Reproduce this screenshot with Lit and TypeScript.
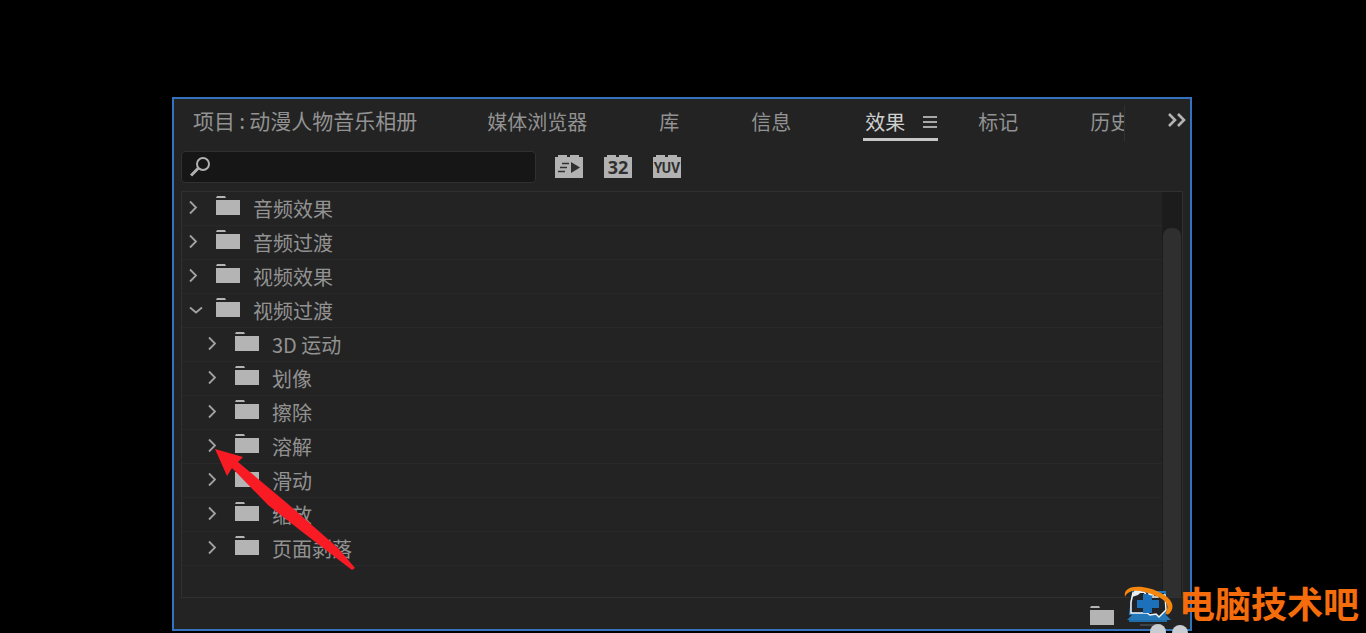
import { LitElement, html, svg, css } from "lit";
import { customElement, state } from "lit/decorators.js";
import { classMap } from "lit/directives/class-map.js";

interface Bin {
  name: string;
  level: number;
  open?: boolean;
}

const TABS = ["项目\u2009:\u2009动漫人物音乐相册", "媒体浏览器", "库", "信息", "效果", "标记", "历史"];

const BINS: Bin[] = [
  { name: "音频效果", level: 0 },
  { name: "音频过渡", level: 0 },
  { name: "视频效果", level: 0 },
  { name: "视频过渡", level: 0, open: true },
  { name: "3D 运动", level: 1 },
  { name: "划像", level: 1 },
  { name: "擦除", level: 1 },
  { name: "溶解", level: 1 },
  { name: "滑动", level: 1 },
  { name: "缩放", level: 1 },
  { name: "页面剥落", level: 1 },
];

const folder = html`<svg class="folder" viewBox="0 0 24 20" width="24" height="20" aria-hidden="true">
  <path fill="#b4b4b4" d="M1 0h8l1 2H0z M0 4h24v15H0z" />
</svg>`;

const chevron = (open?: boolean) => html`<svg class="chevron" viewBox="0 0 16 16" width="16" height="16" aria-hidden="true">
  <path fill="none" stroke="#a2a2a2" stroke-width="1.800" d=${open ? "M2 5.500l6 5 6-5" : "M2 1.500l6 6-6 6"} />
</svg>`;

const brick = (mark: unknown) => html`<svg viewBox="0 0 28 24" width="28" height="24" aria-hidden="true">
  <path fill="#b2b2b2" d="M0 3h3V1h9v2h3V1h9v2h4v21H0z" />
  ${mark}
</svg>`;

const FILTERS = [
  {
    label: "加速效果",
    mark: svg`<path fill="#303030" d="M16 8l9 5.500-9 5.500z"/><path stroke="#303030" stroke-width="1.600" d="M7 9.500h7M5 13.500h7M3 17.500h7"/>`,
  },
  { label: "32 位颜色", mark: svg`<text class="mark" x="14" y="20">32</text>` },
  { label: "YUV 效果", mark: svg`<text class="mark narrow" x="14" y="19">YUV</text>` },
];

@customElement("app-root")
export class AppRoot extends LitElement {
  @state() private active = 4;

  static styles = css`
    :host {
      box-sizing: border-box;
      position: relative;
      min-height: 100vh;
      padding: 97px 174px 2px 172px;
      overflow: hidden;
      background: #000;
      color: #929292;
      font: 400 20px/24px "Noto Sans CJK SC", sans-serif;
      display: flex;
      flex-direction: column;
    }
    * { box-sizing: border-box; }
    button {
      border: 0;
      padding: 0;
      margin: 0;
      background: none;
      color: inherit;
      font: inherit;
      text-align: left;
      white-space: nowrap;
    }
    svg { display: block; flex: none; }
    .panel {
      position: relative;
      flex: 1;
      display: flex;
      flex-direction: column;
      border: 2px solid #3373bd;
      background: #232323;
      padding: 0 7px;
    }
    .header {
      display: flex;
      height: 52px;
      padding: 6px 0 0 12px;
      margin-right: -3px;
    }
    .tabs {
      display: flex;
      flex: 1;
      min-width: 0;
      overflow: hidden;
      gap: 40px;
      height: 36px;
      border-right: 1px solid #303030;
    }
    .tab {
      flex: none;
      display: flex;
      align-items: flex-start;
      padding: 5px 32px 0 0;
    }
    .tab:first-child {
      padding: 3px 30px 0 0;
      font-size: 21px;
    }
    .tab.active {
      gap: 17px;
      padding: 5px 0 0 2px;
      color: #cfcfcf;
      border-bottom: 3px solid #c6c6c6;
    }
    .menu { margin-top: 5px; }
    .more {
      width: 61px;
      height: 30px;
      display: flex;
      justify-content: flex-end;
      align-items: center;
    }
    .tools {
      display: flex;
      align-items: center;
      gap: 19px;
      height: 32px;
    }
    .search {
      display: flex;
      align-items: center;
      width: 355px;
      height: 32px;
      padding: 0 8px;
      border: 1px solid #303030;
      border-radius: 4px;
      background: #161616;
    }
    .search input {
      flex: 1;
      min-width: 0;
      border: 0;
      outline: 0;
      background: none;
      color: inherit;
      font: inherit;
      height: 24px;
    }
    .filters {
      display: flex;
      gap: 21px;
      padding-bottom: 2px;
    }
    .mark {
      fill: #303030;
      text-anchor: middle;
      font-family: "Open Sans", sans-serif;
      font-weight: 700;
      font-size: 18px;
    }
    .narrow {
      font-family: Roboto, sans-serif;
      font-size: 14px;
    }
    .list {
      flex: 1;
      display: flex;
      margin-top: 8px;
      border: 1px solid #303030;
    }
    .rows { flex: 1; min-width: 0; }
    .row {
      display: flex;
      align-items: flex-start;
      width: 100%;
      height: 34px;
      padding: 4px 0 0 6px;
      border-bottom: 1px solid #292929;
    }
    .nested { padding-left: 25px; }
    .chevron { margin: 4px 12px 0 0; }
    .row .name { margin: 1px 0 0 13px; }
    .scroll {
      width: 20px;
      padding: 36px 1px 0;
      background: #1c1c1c;
    }
    .thumb {
      height: 100%;
      border-radius: 8px 8px 0 0;
      background: #2f2f2f;
    }
    .footer {
      display: flex;
      justify-content: flex-end;
      height: 31px;
      padding: 4px 69px 0 0;
    }
    .pointer {
      position: absolute;
      left: 40px;
      top: 349px;
      pointer-events: none;
    }
    .brand {
      position: absolute;
      right: 7px;
      bottom: 0;
      display: flex;
      align-items: flex-start;
      height: 53px;
      color: #f46c0b;
      font-size: 36px;
      line-height: 44px;
      font-weight: 700;
      white-space: nowrap;
    }
    .brand svg { overflow: visible; }
  `;

  render() {
    return html`
      <section class="panel">
        <div class="header">
          <div class="tabs" role="tablist">
            ${TABS.map(
              (name, i) => html`<button
                role="tab"
                aria-selected=${i === this.active}
                class=${classMap({ tab: true, active: i === this.active })}
                @click=${() => (this.active = i)}
              >
                ${name}
                ${i === this.active
                  ? html`<svg class="menu" width="16" height="14" viewBox="0 0 16 14">
                      <path stroke="#a8a8a8" stroke-width="2" d="M1 2h14M1 7h14M1 12h14" />
                    </svg>`
                  : ""}
              </button>`
            )}
          </div>
          <button class="more" aria-label="更多">
            <svg width="18" height="16" viewBox="0 0 18 16">
              <path fill="none" stroke="#b4b4b4" stroke-width="2.600" d="M1 2l6 6-6 6M10 2l6 6-6 6" />
            </svg>
          </button>
        </div>
        <div class="tools">
          <label class="search">
            <svg width="22" height="22" viewBox="0 0 22 22" aria-hidden="true">
              <circle cx="13" cy="8" r="6" fill="none" stroke="#b0b0b0" stroke-width="2" />
              <path stroke="#b0b0b0" stroke-width="3" d="M8.500 12L1 19.500" />
            </svg>
            <input type="text" aria-label="搜索" />
          </label>
          <div class="filters">
            ${FILTERS.map((f) => html`<button aria-label=${f.label}>${brick(f.mark)}</button>`)}
          </div>
        </div>
        <div class="list">
          <div class="rows" role="tree">
            ${BINS.map(
              (bin) => html`<button
                role="treeitem"
                aria-expanded=${!!bin.open}
                class=${classMap({ row: true, nested: bin.level > 0 })}
              >
                ${chevron(bin.open)}${folder}<span class="name">${bin.name}</span>
              </button>`
            )}
          </div>
          <div class="scroll"><div class="thumb"></div></div>
        </div>
        <div class="footer">
          <button aria-label="新建自定义素材箱">${folder}</button>
        </div>
        <svg class="pointer" width="142" height="122" viewBox="0 0 142 122" aria-hidden="true">
          <path fill="#f81b24" d="M1 1l28 8-5 5 50 42 50 44 17 20-3 2-47-36-37-29-36-37-5 8z" />
        </svg>
      </section>
      <div class="brand">
        <svg width="58" height="53" viewBox="0 0 58 53" aria-hidden="true">
          <path fill="#2478b8" d="M12 34h32l6 6H6z" />
          <path fill="#1f6ca9" d="M8 40h38v2H8z" />
          <path fill="#3e4347" d="M19 44h21v2H19z" />
          <path fill="#202327" stroke="#1b79c0" stroke-width="2" d="M12 12h32v22H9z" />
          <path fill="#202327" stroke="#f5f5f5" stroke-width="1.500" d="M12 13l11-1 4 5h10v-2h7l1 15-7 7-3-3-6 1-3-2H10V22z" />
          <path fill="#1d71bb" d="M22 14h9v6h7v8h-7v5h-9v-5h-6v-8h6z" />
          <path fill="#e9edf0" d="M14 9l8 1-5 5-6 2zM26 12l8 1-1 3-5-1z" />
          <path fill="#f5860d" d="M4 17C1 3 26 5 40 13c13 7 14 15 8 21-2 1-4 0-3-2 4-7 0-12-10-16C21 10 8 8 4 17z" />
          <circle cx="37" cy="52" r="8" fill="#c9cdd1" />
          <circle cx="59" cy="53" r="8" fill="#c9cdd1" />
        </svg>
        <span>电脑技术吧</span>
      </div>
    `;
  }
}
